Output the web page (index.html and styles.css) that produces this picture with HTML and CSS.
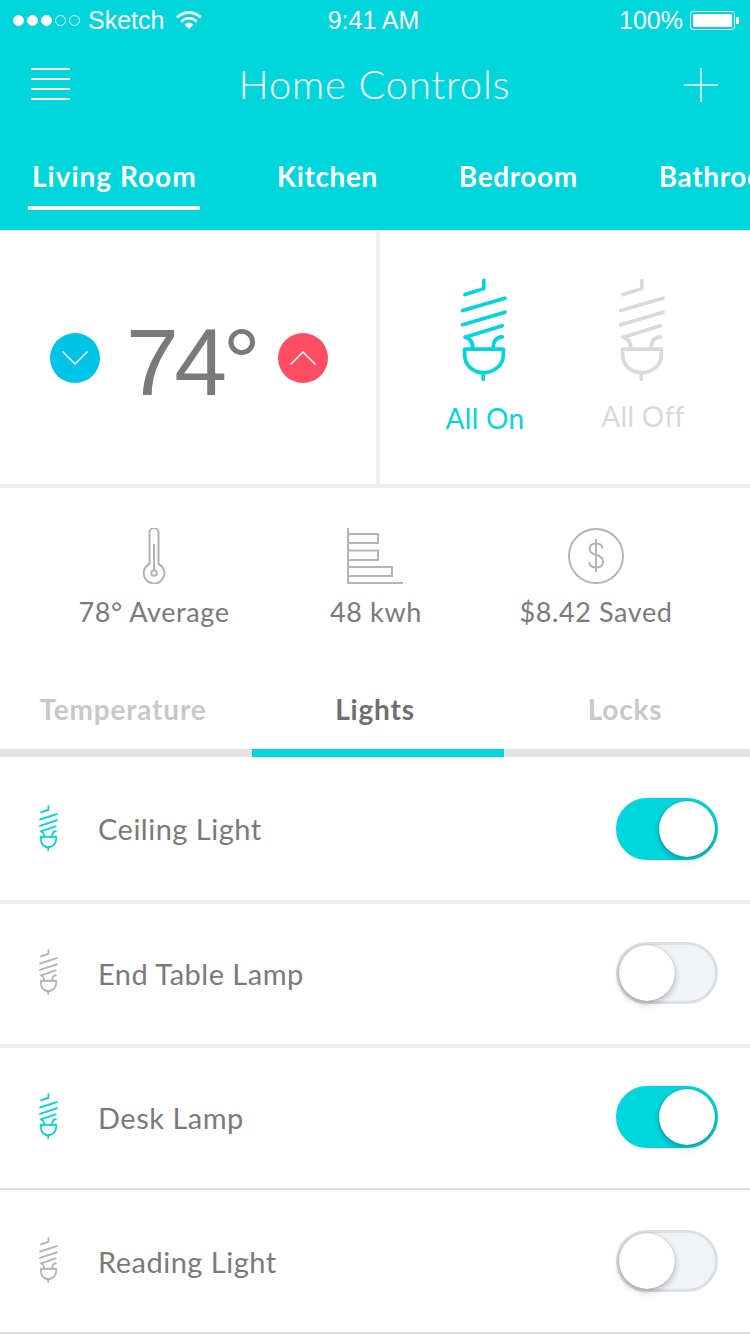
FILE: index.html
```html
<!DOCTYPE html>
<html lang="en">
<head>
    <meta charset="UTF-8">
    <meta name="viewport" content="width=device-width, initial-scale=1.0">
    <title>Home Controls</title>
    <link rel="stylesheet" href="styles.css">
</head>
<body>
    <svg class="defs" width="0" height="0">
        <symbol id="bulb" viewBox="90 40 145 310" preserveAspectRatio="none">
            <g fill="none" stroke="currentColor" stroke-linecap="round" stroke-linejoin="round">
                <path d="M162 47V72L105 90"/>
                <path d="M98 138L226 101"/>
                <path d="M98 181L226 143"/>
                <path d="M106 218L218 184"/>
                <path d="M106 218C122 222 129 234 129 254"/>
                <path d="M190 254C190 228 200 218 218 217"/>
                <path d="M104 254H221V270C221 303 192 325 161 325C130 325 104 303 104 270Z"/>
                <path d="M160 325V345"/>
            </g>
        </symbol>
    </svg>

    <header class="header">
        <div class="status">
            <div class="status-left">
                <span class="dot on"></span><span class="dot on"></span><span class="dot on"></span><span class="dot"></span><span class="dot"></span>
                <span class="carrier">Sketch</span>
                <svg class="wifi" width="26" height="20" viewBox="0 0 26 20">
                    <path d="M1 7.500C8 1 18 1 25 7.500" fill="none" stroke="#fff" stroke-width="2.600"/>
                    <path d="M5.200 11.500C10 7.300 16 7.300 20.800 11.500" fill="none" stroke="#fff" stroke-width="2.600"/>
                    <path d="M8.500 14.500C11.500 12 14.500 12 17.500 14.500L13 19Z" fill="#fff"/>
                </svg>
            </div>
            <div class="status-time">9:41 AM</div>
            <div class="status-right">
                <span>100%</span>
                <span class="battery"><span class="battery-fill"></span></span>
                <span class="battery-tip"></span>
            </div>
        </div>
        <div class="navbar">
            <div class="burger"><span></span><span></span><span></span><span></span></div>
            <h1 class="title">Home Controls</h1>
            <svg class="plus" width="34" height="34" viewBox="0 0 34 34">
                <path d="M17 0V34M0 17H34" stroke="#fff" stroke-width="1.500"/>
            </svg>
        </div>
        <nav class="rooms">
            <a class="room active">Living Room</a>
            <a class="room">Kitchen</a>
            <a class="room">Bedroom</a>
            <a class="room">Bathroom</a>
        </nav>
    </header>

    <section class="controls">
        <div class="thermostat">
            <button class="round down">
                <svg width="28" height="16" viewBox="0 0 28 16"><path d="M1.500 1.500L14 14L26.500 1.500" fill="none" stroke="#fff" stroke-width="1.500"/></svg>
            </button>
            <div class="temp">74°</div>
            <button class="round up">
                <svg width="28" height="16" viewBox="0 0 28 16"><path d="M1.500 14.500L14 2L26.500 14.500" fill="none" stroke="#fff" stroke-width="1.500"/></svg>
            </button>
        </div>
        <div class="switches">
            <div class="switch on">
                <svg class="bulb-big"><use href="#bulb"/></svg>
                <span>All On</span>
            </div>
            <div class="switch off">
                <svg class="bulb-big"><use href="#bulb"/></svg>
                <span>All Off</span>
            </div>
        </div>
    </section>

    <section class="stats">
        <div class="stat stat-temp">
            <svg width="56" height="56" viewBox="0 0 56 56" fill="none" stroke="#b4b4b4" stroke-width="2">
                <path d="M23.500 36V4.500A4.500 4.500 0 0 1 32.500 4.500V36A10.300 10.300 0 1 1 23.500 36Z"/>
                <path d="M28 16V42"/>
                <circle cx="28" cy="45" r="2.800"/>
            </svg>
            <span>78° Average</span>
        </div>
        <div class="stat stat-kwh">
            <svg width="56" height="56" viewBox="0 0 56 56" fill="none" stroke="#b4b4b4" stroke-width="2">
                <path d="M1 0V55H56"/>
                <path d="M1 6H31V15H1"/>
                <path d="M1 22.500H31V32H1"/>
                <path d="M1 39H45V48H1"/>
            </svg>
            <span>48 kwh</span>
        </div>
        <div class="stat stat-saved">
            <svg width="56" height="56" viewBox="0 0 56 56" fill="none" stroke="#b4b4b4" stroke-width="2">
                <circle cx="28" cy="28" r="27"/>
                <path d="M34.500 20.500C34 17 31.500 15.500 28 15.500C24 15.500 21.500 17.500 21.500 21C21.500 24.500 24.500 25.800 28 26.800C32 28 35 29.500 35 33.500C35 37.500 32 39.500 28 39.500C24 39.500 21.500 37.500 21 34"/>
                <path d="M28 11V44"/>
            </svg>
            <span>$8.42 Saved</span>
        </div>
    </section>

    <div class="tabs">
        <a class="tab tab-temp">Temperature</a>
        <a class="tab tab-lights active">Lights</a>
        <a class="tab tab-locks">Locks</a>
    </div>

    <ul class="lights">
        <li class="light on thick first">
            <svg class="bulb-small"><use href="#bulb"/></svg>
            <span class="name">Ceiling Light</span>
            <div class="toggle on"><span class="knob"></span></div>
        </li>
        <li class="light thick raised">
            <svg class="bulb-small"><use href="#bulb"/></svg>
            <span class="name">End Table Lamp</span>
            <div class="toggle"><span class="knob"></span></div>
        </li>
        <li class="light on short raised">
            <svg class="bulb-small"><use href="#bulb"/></svg>
            <span class="name">Desk Lamp</span>
            <div class="toggle on"><span class="knob"></span></div>
        </li>
        <li class="light">
            <svg class="bulb-small"><use href="#bulb"/></svg>
            <span class="name">Reading Light</span>
            <div class="toggle"><span class="knob"></span></div>
        </li>
    </ul>
</body>
</html>
```

FILE: styles.css
```css
* {
    box-sizing: border-box;
}
body {
    margin: 0;
    width: 750px;
    height: 1334px;
    overflow: hidden;
    background: #fff;
    font-family: Lato, "Open Sans", sans-serif;
    color: #7a7a7a;
}
.defs {
    display: block;
    height: 0;
}

/* header */
.header {
    height: 230px;
    background: #00d6dc;
    color: #fff;
    overflow: hidden;
}
.status {
    height: 40px;
    padding: 0 11px 0 13px;
    display: grid;
    grid-template-columns: 1fr auto 1fr;
    align-items: center;
    font-family: "Liberation Sans", Arial, sans-serif;
    font-size: 25px;
}
.status-left {
    display: flex;
    align-items: center;
    gap: 3px;
}
.status-time {
    padding-right: 5px;
}
.dot {
    flex: none;
    width: 11px;
    height: 11px;
    border-radius: 50%;
    border: 1px solid #fff;
}
.dot.on {
    background: #fff;
}
.carrier {
    margin: 0 9px 0 5px;
}
.status-right {
    display: flex;
    align-items: center;
    justify-content: flex-end;
}
.battery {
    width: 45px;
    height: 19px;
    margin-left: 7px;
    padding: 2px;
    border: 1px solid #fff;
    border-radius: 3px;
}
.battery-fill {
    display: block;
    height: 100%;
    background: #fff;
    border-radius: 1px;
}
.battery-tip {
    width: 3px;
    height: 7px;
    margin-left: 1px;
    background: #fff;
}
.navbar {
    height: 90px;
    padding: 0 32px 0 31px;
    display: grid;
    grid-template-columns: 1fr auto 1fr;
    align-items: center;
}
.burger {
    width: 39px;
    height: 32px;
    margin-bottom: 2px;
    display: flex;
    flex-direction: column;
    justify-content: space-between;
}
.burger span {
    height: 2px;
    background: #fff;
}
.title {
    margin: 0 0 2px;
    font-size: 40px;
    font-weight: 300;
    letter-spacing: 0.8px;
}
.plus {
    display: block;
    justify-self: end;
}
.rooms {
    display: flex;
    padding: 0 0 0 28px;
    gap: 73px;
    white-space: nowrap;
}
.room {
    flex: none;
    height: 80px;
    padding: 26px 4px 0;
    font-size: 28px;
    font-weight: 700;
    letter-spacing: 0.6px;
    line-height: 40px;
    border-bottom: 4px solid transparent;
}
.room.active {
    width: 172px;
    text-align: center;
    letter-spacing: 1px;
    border-bottom-color: #fff;
}

/* thermostat and all on/off */
.controls {
    height: 258px;
    display: flex;
    border-bottom: 4px solid #eee;
}
.thermostat {
    width: 380px;
    height: 258px;
    border-right: 4px solid #eee;
    padding-left: 50px;
    padding-bottom: 2px;
    display: flex;
    align-items: center;
}
.round {
    width: 50px;
    height: 50px;
    padding: 0;
    border: none;
    border-radius: 50%;
    display: flex;
    align-items: center;
    justify-content: center;
}
.round.down {
    background: #00c3e8;
}
.round.up {
    background: #ff4d64;
}
.temp {
    width: 178px;
    padding: 8px 0 0 26px;
    font-family: "Liberation Sans", Arial, sans-serif;
    font-size: 95px;
    letter-spacing: -4.500px;
    line-height: 100px;
    color: #7a7a7a;
}
.switches {
    flex: 1;
    display: flex;
    padding: 48px 0 0 65px;
    gap: 78px;
}
.switch {
    width: 80px;
    display: flex;
    flex-direction: column;
    align-items: center;
    font-size: 28px;
    letter-spacing: 0.3px;
}
.switch span {
    margin-top: 20px;
    line-height: 34px;
    white-space: nowrap;
}
.switch.on {
    color: #00d6dc;
}
.switch.off {
    color: #d9d9d9;
}
.switch.off span {
    margin-top: 18px;
}
.bulb-big {
    display: block;
    width: 48px;
    height: 103px;
    margin-left: -2px;
    stroke-width: 11px;
}

/* stats */
.stats {
    height: 192px;
    display: flex;
    padding-top: 40px;
}
.stat {
    display: flex;
    flex-direction: column;
    align-items: center;
    font-size: 27px;
    letter-spacing: 0.6px;
    line-height: 34px;
    white-space: nowrap;
}
.stat span {
    margin-top: 11px;
}
.stat svg {
    display: block;
}
.stat-temp {
    width: 308px;
}
.stat-kwh {
    width: 134px;
}
.stat-kwh span {
    padding-left: 2px;
}
.stat-saved {
    width: 308px;
}

/* tabs */
.tabs {
    height: 77px;
    display: grid;
    grid-template-columns: 252px 252px 246px;
    border-bottom: 8px solid #e5e5e5;
}
.tab {
    height: 77px;
    padding-top: 12px;
    text-align: center;
    font-size: 28px;
    font-weight: 700;
    letter-spacing: 0.8px;
    line-height: 34px;
    color: #c8c8c8;
    border-bottom: 8px solid transparent;
}
.tab-temp,
.tab-lights {
    padding-right: 6px;
}
.tab-locks {
    padding-right: 4px;
}
.tab.active {
    color: #6f6f6f;
    border-bottom-color: #00d6dc;
}

/* list of lights */
.lights {
    margin: 0;
    padding: 0;
    list-style: none;
}
.light {
    height: 144px;
    padding: 0 32px 0 39px;
    display: flex;
    align-items: center;
    color: #b4b4b4;
    border-bottom: 2px solid #ddd;
}
.light.first {
    height: 147px;
}
.light.short {
    height: 142px;
}
.light.thick {
    border-bottom: 4px solid #eee;
}
.light.raised {
    padding-bottom: 2px;
}
.light.on {
    color: #00d6dc;
}
.bulb-small {
    flex: none;
    width: 19px;
    height: 46px;
    margin-bottom: 2px;
    stroke-width: 13px;
}
.name {
    flex: 1;
    margin-left: 40px;
    font-size: 29px;
    letter-spacing: 0.5px;
    color: #7a7a7a;
}
.toggle {
    width: 102px;
    height: 62px;
    border-radius: 31px;
    border: 3px solid #dcdfe3;
    background: #f1f4f7;
    display: flex;
    align-items: center;
}
.toggle.on {
    border-color: #00d6dc;
    background: #00d6dc;
    justify-content: flex-end;
}
.knob {
    width: 56px;
    height: 56px;
    border-radius: 50%;
    background: #fff;
    box-shadow: 0 3px 6px rgba(0, 0, 0, 0.25), 0 0 1px rgba(0, 0, 0, 0.4);
}
```
